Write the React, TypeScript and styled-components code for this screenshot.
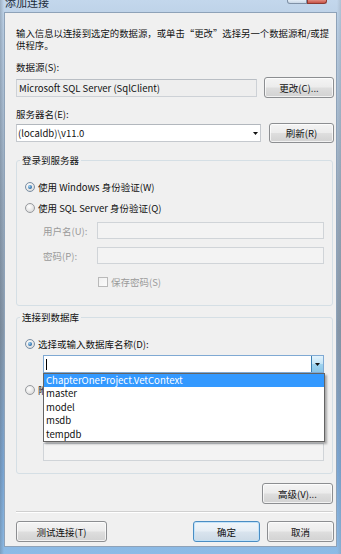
import React from 'react'
import styled, { createGlobalStyle, css } from 'styled-components'

const GlobalStyle = createGlobalStyle`
  html, body {
    margin: 0;
    padding: 0;
  }
  body {
    font-family: "Noto Sans CJK SC", "Noto Sans", sans-serif;
  }
`

const databases = ['ChapterOneProject.VetContext', 'master', 'model', 'msdb', 'tempdb']

const Arrow = () => (
  <svg width="5" height="3" viewBox="0 0 5 3">
    <path d="M0 0H5L2.5 3Z" fill="#111" />
  </svg>
)

export default function App() {
  return (
    <Window>
      <GlobalStyle />
      <TitleBar>
        <TitleText>添加连接</TitleText>
        <CaptionButtons>
          <CaptionButton />
          <CaptionButton $close />
        </CaptionButtons>
      </TitleBar>
      <Panel>
        <Intro>
          <IntroLine>输入信息以连接到选定的数据源，或单击“更改”选择另一个数据源和/或提</IntroLine>
          <IntroLine>供程序。</IntroLine>
        </Intro>
        <FieldLabel $top={10}>数据源(S):</FieldLabel>
        <Row $top={4}>
          <ReadOnlyBox>Microsoft SQL Server (SqlClient)</ReadOnlyBox>
          <Button $width={70}>更改(C)...</Button>
        </Row>
        <FieldLabel $top={10}>服务器名(E):</FieldLabel>
        <Row $top={3}>
          <ComboBox $width={245}>
            <ComboText>(localdb)\v11.0</ComboText>
            <PlainArrow>
              <Arrow />
            </PlainArrow>
          </ComboBox>
          <Button $width={65} $height={20}>刷新(R)</Button>
        </Row>

        <GroupBox $top={11}>
          <Legend>登录到服务器</Legend>
          <GroupBody $bottom={16}>
            <RadioRow>
              <RadioMark $checked />
              使用 Windows 身份验证(W)
            </RadioRow>
            <RadioRow $top={7}>
              <RadioMark />
              使用 SQL Server 身份验证(Q)
            </RadioRow>
            <CredRow $top={7}>
              <CredLabel>用户名(U):</CredLabel>
              <TextInput $width={227} />
            </CredRow>
            <CredRow $top={8}>
              <CredLabel>密码(P):</CredLabel>
              <TextInput $width={227} />
            </CredRow>
            <CheckRow>
              <CheckMark />
              保存密码(S)
            </CheckRow>
          </GroupBody>
        </GroupBox>

        <GroupBox $top={5}>
          <Legend>连接到数据库</Legend>
          <GroupBody $bottom={12}>
            <RadioRow>
              <RadioMark $checked />
              选择或输入数据库名称(D):
            </RadioRow>
            <Indent $top={4}>
              <DbCombo>
                <Caret />
                <DropButton>
                  <Arrow />
                </DropButton>
                <DropList>
                  {databases.map((name, i) => (
                    <DropItem key={name} $active={i === 0}>
                      {name}
                    </DropItem>
                  ))}
                </DropList>
              </DbCombo>
            </Indent>
            <RadioRow $top={10}>
              <RadioMark />
              附
            </RadioRow>
            {/* rows hidden behind the open list */}
            <Indent $top={5}>
              <TextInput $width={281} $height={19} />
            </Indent>
            <Spacer />
            <Indent $top={5}>
              <TextInput $width={281} $height={18} />
            </Indent>
          </GroupBody>
        </GroupBox>

        <AdvancedRow>
          <Button $width={71}>高级(V)...</Button>
        </AdvancedRow>
        <Separator />
        <ButtonBar>
          <Button $width={91}>测试连接(T)</Button>
          <ButtonPair>
            <Button $width={67} $default>
              确定
            </Button>
            <Button $width={67}>取消</Button>
          </ButtonPair>
        </ButtonBar>
      </Panel>
    </Window>
  )
}

const Window = styled.div`
  width: 341px;
  height: 554px;
  box-sizing: border-box;
  display: flex;
  flex-direction: column;
  padding: 0 4px 7px 4px;
  overflow: hidden;
  background:
    linear-gradient(90deg, rgba(90, 104, 120, 0.35) 0, rgba(90, 104, 120, 0) 4px, rgba(0, 0, 0, 0) 337px, rgba(120, 130, 140, 0.25) 100%),
    linear-gradient(180deg, #c3d7ec 0, #b8cde3 30px, #98aabd 200px, #8798aa 330px, #7aa7d6 470px, #8dbbe6 100%);
`

const TitleBar = styled.div`
  height: 12px;
  flex: none;
  display: flex;
  align-items: flex-start;
  justify-content: space-between;
  overflow: hidden;
`

const TitleText = styled.div`
  margin: -4px 0 0 1px;
  font-size: 11px;
  line-height: 13px;
  color: #1b2a3a;
`

const CaptionButtons = styled.div`
  display: flex;
  margin-right: 10px;
`

const CaptionButton = styled.div<{ $close?: boolean }>`
  width: 20px;
  height: 4px;
  box-sizing: border-box;
  border: 1px solid ${p => (p.$close ? '#8d3a32' : '#7f91a6')};
  border-top: none;
  border-radius: ${p => (p.$close ? '0 0 3px 0' : '0 0 0 3px')};
  background: ${p => (p.$close ? 'linear-gradient(#e08a7e, #c75246)' : 'linear-gradient(#e4edf6, #c9d7e6)')};
`

const Panel = styled.div`
  height: 535px;
  box-sizing: border-box;
  display: flex;
  flex-direction: column;
  padding: 15px 2px 4px 11px;
  background: #f0f0f0;
  border: 1px solid #8ea2b8;
  font-size: 9.5px;
  color: #111;
`

const Intro = styled.div`
  display: flex;
  flex-direction: column;
  font-size: 9.4px;
  white-space: nowrap;
`

const IntroLine = styled.div`
  height: 11.5px;
  line-height: 11.5px;
`

const FieldLabel = styled.div<{ $top: number }>`
  margin-top: ${p => p.$top}px;
  line-height: 12px;
`

const Row = styled.div<{ $top: number }>`
  margin-top: ${p => p.$top}px;
  display: flex;
  align-items: center;
  justify-content: space-between;
`

const ReadOnlyBox = styled.div`
  width: 241px;
  height: 18px;
  box-sizing: border-box;
  padding-left: 2px;
  line-height: 16px;
  border: 1px solid #cdd1d6;
  border-top-color: #b9bec4;
  background: #eeeeee;
`

const ComboBox = styled.div<{ $width: number }>`
  width: ${p => p.$width}px;
  height: 18px;
  box-sizing: border-box;
  display: flex;
  align-items: center;
  justify-content: space-between;
  border: 1px solid #c5c9ce;
  border-top-color: #b2b7bd;
  background: #fff;
`

const ComboText = styled.span`
  padding-left: 1px;
  line-height: 16px;
`

const PlainArrow = styled.span`
  display: flex;
  align-items: center;
  margin-right: 2px;
`

const Button = styled.button<{ $width: number; $height?: number; $default?: boolean }>`
  width: ${p => p.$width}px;
  height: ${p => p.$height ?? 21}px;
  flex: none;
  box-sizing: border-box;
  padding: 0;
  margin: 0;
  font-family: inherit;
  font-size: 9.5px;
  color: #111;
  border: 1px solid #8c8e91;
  border-radius: 3px;
  background: linear-gradient(180deg, #f4f4f4 0%, #ececec 48%, #dedede 52%, #d2d2d2 100%);
  box-shadow: inset 0 0 0 1px rgba(255, 255, 255, 0.7);
  ${p =>
    p.$default &&
    css`
      border-color: #4a8dc3;
      background: linear-gradient(180deg, #f1f6fa 0%, #e6eef5 48%, #d9e4ee 52%, #ccdae6 100%);
      box-shadow: inset 0 0 0 1px rgba(190, 225, 250, 0.9);
    `}
`

const GroupBox = styled.fieldset<{ $top: number }>`
  margin: ${p => p.$top}px 1px 0 0;
  padding: 0;
  min-width: 0;
  border: 1px solid #d5dfe5;
  border-radius: 3px;
`

const Legend = styled.legend`
  margin-left: 3px;
  padding: 0 2px;
  line-height: 12px;
  color: #111;
`

const GroupBody = styled.div<{ $bottom: number }>`
  display: flex;
  flex-direction: column;
  padding: 14px 8px ${p => p.$bottom}px 8px;
`

const RadioRow = styled.div<{ $top?: number }>`
  margin-top: ${p => p.$top ?? 0}px;
  height: 14px;
  display: flex;
  align-items: center;
  gap: 3px;
  white-space: nowrap;
`

const RadioMark = styled.span<{ $checked?: boolean }>`
  width: 10px;
  height: 10px;
  flex: none;
  box-sizing: border-box;
  display: flex;
  align-items: center;
  justify-content: center;
  border-radius: 50%;
  border: 1px solid #979a9e;
  background: radial-gradient(circle at 40% 35%, #ffffff 0%, #e4e4e4 60%, #cfcfcf 100%);
  ${p =>
    p.$checked &&
    css`
      border-color: #7a8ea3;
      &::after {
        content: '';
        width: 4px;
        height: 4px;
        border-radius: 50%;
        background: radial-gradient(circle at 35% 35%, #9fd2f2 0%, #2a6aa8 70%, #1d4d80 100%);
      }
    `}
`

const CredRow = styled.div<{ $top: number }>`
  margin: ${p => p.$top}px 0 0 18px;
  display: flex;
  align-items: center;
`

const CredLabel = styled.span`
  width: 54px;
  color: #9a9a9a;
  line-height: 12px;
`

const TextInput = styled.div<{ $width: number; $height?: number }>`
  width: ${p => p.$width}px;
  height: ${p => p.$height ?? 17}px;
  box-sizing: border-box;
  border: 1px solid #d0d4d8;
  background: #f3f3f3;
`

const CheckRow = styled.div`
  margin: 11px 0 0 73px;
  height: 14px;
  display: flex;
  align-items: center;
  gap: 3px;
  color: #9a9a9a;
`

const CheckMark = styled.span`
  width: 10px;
  height: 10px;
  box-sizing: border-box;
  border: 1px solid #b9b9b9;
  background: linear-gradient(135deg, #f0f0f0, #fbfbfb);
`

const Indent = styled.div<{ $top: number }>`
  margin: ${p => p.$top}px 0 0 18px;
`

const Spacer = styled.div`
  height: 17px;
`

const DbCombo = styled.div`
  position: relative;
  width: 281px;
  height: 18px;
  box-sizing: border-box;
  display: flex;
  align-items: center;
  justify-content: space-between;
  border: 1px solid #7fa9d3;
  background: #fff;
`

const Caret = styled.span`
  width: 1px;
  height: 11px;
  margin-left: 2px;
  background: #000;
`

const DropButton = styled.span`
  width: 12px;
  height: 16px;
  box-sizing: border-box;
  display: flex;
  align-items: center;
  justify-content: center;
  border-left: 1px solid #3c7fb1;
  background: linear-gradient(180deg, #e3f3fc 0%, #c2e4f6 50%, #9fd3ef 51%, #8ac6e8 100%);
`

const DropList = styled.div`
  position: absolute;
  top: 17px;
  left: -1px;
  z-index: 2;
  width: 282px;
  box-sizing: border-box;
  border: 1px solid #646464;
  background: #fff;
  box-shadow: 2px 2px 2px rgba(0, 0, 0, 0.3);
`

const DropItem = styled.div<{ $active?: boolean }>`
  height: 13.4px;
  padding-left: 2px;
  line-height: 13.4px;
  font-size: 9.6px;
  color: ${p => (p.$active ? '#fff' : '#111')};
  background: ${p => (p.$active ? '#3399ff' : 'transparent')};
`

const AdvancedRow = styled.div`
  margin: 9px 1px 0 0;
  display: flex;
  justify-content: flex-end;
`

const Separator = styled.div`
  margin: 7px 1px 0 0;
  height: 0;
  border-top: 1px solid #d0d0d0;
  border-bottom: 1px solid #ffffff;
`

const ButtonBar = styled.div`
  margin-top: 8px;
  display: flex;
  justify-content: space-between;
`

const ButtonPair = styled.div`
  display: flex;
  gap: 7px;
`
